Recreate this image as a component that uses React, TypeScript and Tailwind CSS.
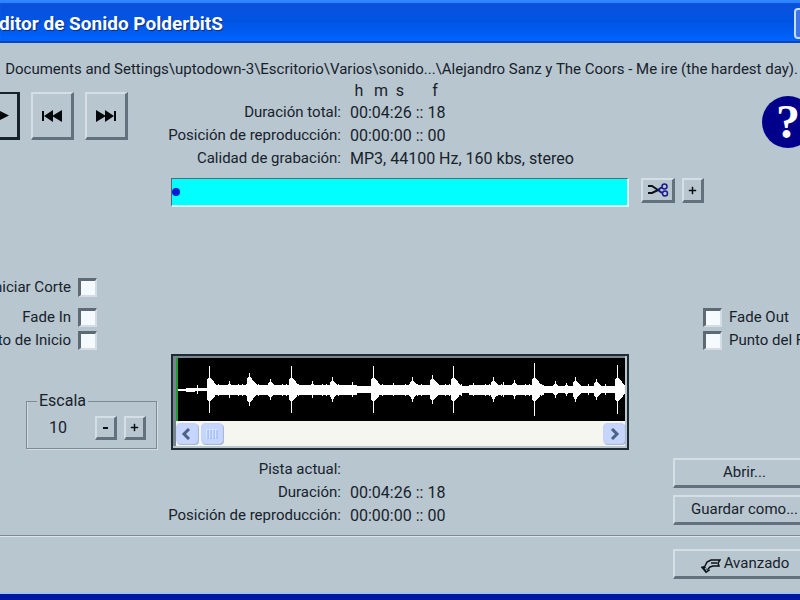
import React from "react";

const RAISED =
  "flex items-center justify-center border-t-2 border-l-2 border-r-3 border-b-3 border-t-[#d3dee5] border-l-[#d3dee5] border-r-[#62717c] border-b-[#62717c] bg-[#b8c6cf]";

// [x, height] of every beat that stands out of the track
const PEAKS = [
  [19, 4],
  [31, 23],
  [51, 8],
  [71, 16],
  [92, 10],
  [113, 23],
  [134, 8],
  [154, 12],
  [174, 7],
  [195, 23],
  [215, 6],
  [235, 12],
  [255, 14],
  [276, 23],
  [296, 6],
  [316, 12],
  [326, 7],
  [337, 9],
  [357, 26],
  [378, 8],
  [389, 6],
  [398, 12],
  [411, 5],
  [419, 10],
  [428, 5],
  [440, 24],
];

const getAmplitude = (x: number) => {
  if (x < 8) return 0.5;
  if (x < 29) return x === 19 ? 4 : x < 17 ? 1.5 : 1;
  const isQuiet = (x > 178 && x < 193) || (x > 284 && x < 292) || x > 366;
  let amplitude = isQuiet ? 3 : 4.5;
  if (!isQuiet && x % 4 === 0 && x % 41 > 18) amplitude += 1;
  for (const [peak, height] of PEAKS) {
    const distance = x - peak;
    if (distance === 0) amplitude = Math.max(amplitude, height);
    if ((distance < 0 && distance > -3) || (distance > 0 && distance < 8)) {
      const body = height > 18 ? 12 : height * 0.8;
      amplitude = Math.max(amplitude, body - Math.abs(distance) * 1.1);
    }
  }
  return amplitude;
};

const getWavePath = () => {
  let path = "";
  for (let x = 0; x < 448; x++) {
    const a = getAmplitude(x);
    path += `M${x} ${31 - a}h1v${a * 2 + 1}h-1z`;
  }
  return path;
};

const App: React.FC = () => {
  return (
    <div className="flex min-h-screen flex-col overflow-hidden bg-[#b8c6cf] font-['Roboto','Liberation_Sans',sans-serif] text-[15px] leading-[23px] text-[#17222b]">
      <TitleBar />
      <main className="flex flex-1 flex-col border-b-6 border-[#0019a0] shadow-[inset_0_-2px_0_#9fc4ee]">
        <p className="flex justify-end overflow-hidden pt-[15px] pr-[2px] whitespace-nowrap">
          Documents and Settings\uptodown-3\Escritorio\Varios\sonido...\Alejandro Sanz y The Coors - Me ire (the hardest day).
        </p>
        <TotalInfo />
        <PositionBar />
        <Marks />
        <TrackPanel />
        <CurrentTrack />
        <footer className="flex justify-end border-t border-[#7c8a94] pt-[13px] shadow-[inset_0_1px_0_#dbe5eb]">
          <WideButton>
            <AdvancedIcon />
            Avanzado
          </WideButton>
        </footer>
      </main>
    </div>
  );
};

const TitleBar: React.FC = () => (
  <header className="flex h-[43px] items-center justify-between bg-linear-to-b from-[#0c50d8] via-[#0054e3] to-[#0066ff] shadow-[inset_0_-2px_0_#0b44c0,inset_0_3px_1px_#2f86ff]">
    <h1 className="flex w-[223px] justify-end overflow-hidden pt-1 text-[19px] font-bold whitespace-nowrap text-white [text-shadow:1px_1px_1px_#0a2a80]">
      Editor de Sonido PolderbitS
    </h1>
    <button
      aria-label="Minimizar"
      className="mt-1 -mr-6 h-[31px] w-[30px] rounded-sm border-2 border-[#c8dcff] bg-[#3f74e8]"
    />
  </header>
);

const TotalInfo: React.FC = () => (
  <section className="flex justify-between">
    <div className="flex w-32 shrink-0 justify-end gap-[11px] pt-[11px]">
      <button
        aria-label="Reproducir"
        className="flex h-12 w-[43px] shrink-0 items-center justify-end border-2 border-r-3 border-b-3 border-[#17222b] bg-[#b8c6cf] pr-2"
      >
        <svg width="20" height="16" viewBox="0 0 20 16">
          <path d="M7 1v13l13-6.500z" fill="#05080a" />
        </svg>
      </button>
      <button aria-label="Anterior" className={`h-12 w-[43px] shrink-0 ${RAISED}`}>
        <svg width="22" height="12" viewBox="0 0 22 12">
          <path d="M1 1h2v10H1zM3 6L12 0v12zM11 6l10-6v12z" fill="#05080a" />
        </svg>
      </button>
      <button aria-label="Siguiente" className={`h-12 w-[43px] shrink-0 ${RAISED}`}>
        <svg width="22" height="12" viewBox="0 0 22 12">
          <path d="M19 1h2v10h-2zM19 6L10 0v12zM11 6L1 0v12z" fill="#05080a" />
        </svg>
      </button>
    </div>
    <div className="flex-1">
      <div className="flex h-5 pl-[222px] text-base leading-5">
        <span className="w-[18px] text-center">h</span>
        <span className="w-[26px] text-center">m</span>
        <span className="w-3 text-center">s</span>
        <span className="w-[58px] text-center">f</span>
      </div>
      <InfoRow label="Duración total:" value="00:04:26 :: 18" indent="w-[213px]" />
      <InfoRow label="Posición de reproducción:" value="00:00:00 :: 00" indent="w-[213px]" />
      <InfoRow label="Calidad de grabación:" value="MP3, 44100 Hz, 160 kbs, stereo" indent="w-[213px]" />
    </div>
    <button
      aria-label="Ayuda"
      className="mt-[15px] -mr-[14px] flex size-[52px] shrink-0 items-center justify-center rounded-full bg-[#00008b] font-['Liberation_Serif',serif] text-5xl font-bold text-white"
    >
      ?
    </button>
  </section>
);

const InfoRow: React.FC<{ label: string; value: string; indent: string }> = ({ label, value, indent }) => (
  <div className="flex gap-[9px] whitespace-nowrap">
    <span className={`text-right ${indent}`}>{label}</span>
    <span className="text-base leading-[23px]">{value}</span>
  </div>
);

const PositionBar: React.FC = () => (
  <section className="flex items-start pt-2 pl-[171px]">
    <input
      type="range"
      aria-label="Posición"
      min={0}
      max={266}
      defaultValue={0}
      className="h-[29px] flex-1 appearance-none border-t border-r-2 border-b-2 border-l border-t-[#4f6b78] border-r-[#d8f4f8] border-b-[#d8f4f8] border-l-[#4f6b78] bg-[#00ffff] [&::-webkit-slider-thumb]:size-2 [&::-webkit-slider-thumb]:appearance-none [&::-webkit-slider-thumb]:rounded-full [&::-webkit-slider-thumb]:bg-[#0018d8]"
    />
    <div className="flex w-[171px] gap-[7px] pl-3">
      <button aria-label="Cortar" className={`h-[25px] w-[34px] ${RAISED}`}>
        <svg width="22" height="14" viewBox="0 0 22 14" fill="none" strokeWidth="2">
          <path d="M1 3h4l6 4M1 10h4l6-3h2" stroke="#0a1016" />
          <path d="M11 7l4-3M11 7l4 3" stroke="#1a1a8c" />
          <ellipse cx="17.500" cy="3.500" rx="2.500" ry="2.500" stroke="#1a1a8c" strokeWidth="1.500" />
          <ellipse cx="18" cy="10.500" rx="2.500" ry="2.500" stroke="#1a1a8c" strokeWidth="1.500" />
        </svg>
      </button>
      <button aria-label="Ampliar" className={`h-[25px] w-[22px] ${RAISED}`}>
        <PlusIcon />
      </button>
    </div>
  </section>
);

const PlusIcon: React.FC = () => (
  <svg width="9" height="9" viewBox="0 0 9 9">
    <path d="M4 1h1v3h3v1H5v3H4V5H1V4h3z" fill="#0a1016" stroke="#0a1016" strokeWidth="0.500" />
  </svg>
);

const CHECKBOX =
  "size-[19px] shrink-0 appearance-none border-t-3 border-l-3 border-r-2 border-b-2 border-t-[#5d6a74] border-l-[#5d6a74] border-r-[#d3dde3] border-b-[#d3dde3] bg-[#f4fafd] checked:bg-[#0018d8]";

const Marks: React.FC = () => (
  <section className="flex items-end justify-between pt-[69px]">
    <div className="flex w-[97px] flex-col items-end overflow-hidden">
      <label className="mb-[7px] flex items-center gap-[7px] whitespace-nowrap">
        Iniciar Corte
        <input type="checkbox" className={CHECKBOX} />
      </label>
      <label className="flex items-center gap-[7px] whitespace-nowrap">
        Fade In
        <input type="checkbox" className={CHECKBOX} />
      </label>
      <label className="flex items-center gap-[7px] whitespace-nowrap">
        Punto de Inicio
        <input type="checkbox" className={CHECKBOX} />
      </label>
    </div>
    <div className="w-[97px] overflow-hidden">
      <label className="flex items-center gap-[7px] whitespace-nowrap">
        <input type="checkbox" className={CHECKBOX} />
        Fade Out
      </label>
      <label className="flex items-center gap-[7px] whitespace-nowrap">
        <input type="checkbox" className={CHECKBOX} />
        Punto del Final
      </label>
    </div>
  </section>
);

const TrackPanel: React.FC = () => (
  <section className="flex items-end pt-[2px] pr-[171px]">
    <div className="w-[171px] shrink-0 pr-[14px] pb-px pl-[26px]">
      <fieldset className="flex h-[60px] items-center border border-[#7c8a94] pr-[10px] pb-[6px] pl-[22px] text-base shadow-[inset_1px_0_0_#d3dde3,1px_1px_0_#d3dde3]">
        <legend className="-ml-3 px-[2px]">Escala</legend>
        <span className="flex-1">10</span>
        <div className="flex gap-[7px]">
          <button aria-label="Reducir escala" className={`h-6 w-[22px] ${RAISED}`}>
            <svg width="5" height="9" viewBox="0 0 5 9">
              <path d="M0 4h5v2H0z" fill="#0a1016" />
            </svg>
          </button>
          <button aria-label="Aumentar escala" className={`h-6 w-[22px] ${RAISED}`}>
            <PlusIcon />
          </button>
        </div>
      </fieldset>
    </div>
    <div className="flex-1 border-2 border-[#1f2b33] bg-[#b8c6cf] pr-[2px] pb-[2px]">
      <div className="border-t-2 border-l-3 border-[#77858f]">
        <div className="border-l-2 border-[#1f9a35] bg-black">
          <svg className="block h-[63px] w-full" viewBox="0 0 448 63" preserveAspectRatio="none" shapeRendering="crispEdges">
            <path d={getWavePath()} fill="#ffffff" />
          </svg>
        </div>
        <div className="flex items-center justify-between bg-[#f6f6f1] py-[2px]">
          <div className="flex gap-[3px]">
            <ScrollButton label="Desplazar a la izquierda">
              <svg width="12" height="12" viewBox="0 0 12 12">
                <path d="M8 1L3 6l5 5" fill="none" stroke="#4d6185" strokeWidth="3" />
              </svg>
            </ScrollButton>
            <ScrollButton label="Barra de desplazamiento">
              <svg width="12" height="10" viewBox="0 0 12 10">
                <path d="M1 0v9M4 0v9M7 0v9M10 0v9" stroke="#eef4fe" />
                <path d="M2 1v9M5 1v9M8 1v9M11 1v9" stroke="#8cb0f8" />
              </svg>
            </ScrollButton>
          </div>
          <ScrollButton label="Desplazar a la derecha">
            <svg width="12" height="12" viewBox="0 0 12 12">
              <path d="M4 1l5 5-5 5" fill="none" stroke="#4d6185" strokeWidth="3" />
            </svg>
          </ScrollButton>
        </div>
      </div>
    </div>
  </section>
);

const ScrollButton: React.FC<{ label: string; children: React.ReactNode }> = ({ label, children }) => (
  <button
    aria-label={label}
    className="flex h-[21px] w-[22px] items-center justify-center rounded-sm border border-[#c4d2f4] bg-[#c6d5fd] shadow-[1px_1px_0_#a9b8d4]"
  >
    {children}
  </button>
);

const CurrentTrack: React.FC = () => (
  <section className="flex justify-between pb-2">
    <div className="pt-2">
      <InfoRow label="Pista actual:" value="" indent="w-[341px]" />
      <InfoRow label="Duración:" value="00:04:26 :: 18" indent="w-[341px]" />
      <InfoRow label="Posición de reproducción:" value="00:00:00 :: 00" indent="w-[341px]" />
    </div>
    <div className="flex flex-col gap-[7px] pt-2">
      <WideButton>Abrir...</WideButton>
      <WideButton>Guardar como...</WideButton>
    </div>
  </section>
);

const WideButton: React.FC<{ children: React.ReactNode }> = ({ children }) => (
  <button
    className={`-mr-[17px] h-[30px] w-[144px] gap-[3px] whitespace-nowrap ${RAISED}`}
  >
    {children}
  </button>
);

const AdvancedIcon: React.FC = () => (
  <svg className="mt-1" width="21" height="16" viewBox="0 0 21 16" fill="none" stroke="#0a1016" strokeWidth="1.500">
    <path d="M5 8l2-4 4-2h9l-2 3 1 3h-6l-3 1-2 2" />
    <path d="M11 5h6" />
    <path d="M1 9l4-1 1 3 4 1-4 3z" fill="#0a1016" stroke="#0a1016" strokeWidth="0.500" />
    <path d="M5 10l2 3" stroke="#b8c6cf" strokeWidth="1" />
  </svg>
);

export default App;
